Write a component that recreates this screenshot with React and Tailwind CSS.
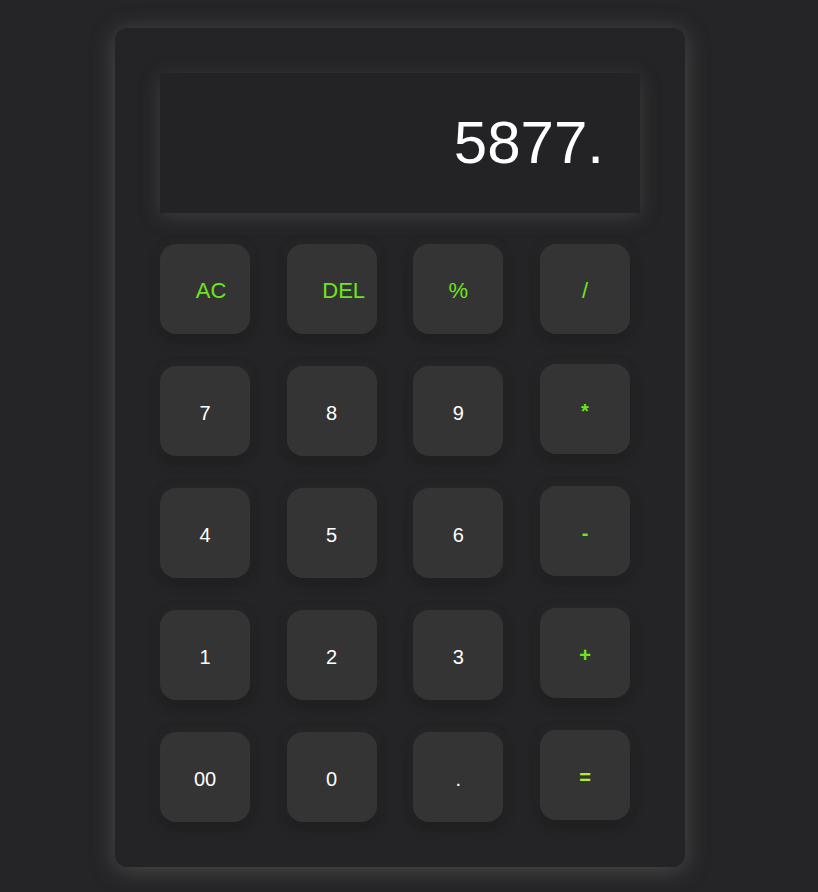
import React from "react";

const rows = [
  [
    { label: "AC", kind: "fn", pad: "pl-3" },
    { label: "DEL", kind: "fn", pad: "pl-6" },
    { label: "%", kind: "fn", pad: "" },
    { label: "/", kind: "fn", pad: "" },
  ],
  [
    { label: "7" },
    { label: "8" },
    { label: "9" },
    { label: "*", kind: "op", lift: true },
  ],
  [
    { label: "4" },
    { label: "5" },
    { label: "6" },
    { label: "-", kind: "op", lift: true },
  ],
  [
    { label: "1" },
    { label: "2" },
    { label: "3" },
    { label: "+", kind: "op", lift: true },
  ],
  [
    { label: "00" },
    { label: "0" },
    { label: "." },
    { label: "=", kind: "eq", lift: true },
  ],
];

const Key = ({ label, kind, pad = "", lift }) => {
  let text = "text-white text-[20px]";
  if (kind === "fn") text = "text-[#6ee41c] text-[22px]";
  if (kind === "op") text = "text-[#6ee41c] text-[20px] font-bold";
  if (kind === "eq") text = "text-[#b0f020] text-[20px] font-bold";

  return (
    <button
      className={`w-[90px] h-[90px] rounded-2xl bg-[#343434] flex items-center justify-center pt-[3px] shadow-[0_4px_14px_rgba(0,0,0,0.3),0_0_10px_rgba(80,80,80,0.25)] ${pad} ${text} ${lift ? "-mt-0.5" : ""}`}
    >
      {label}
    </button>
  );
};

const App = () => {
  return (
    <div className="min-h-[892px] bg-[#252527] flex justify-center pr-[18px] pt-[28px] font-['Liberation_Sans',Arial,sans-serif]">
      <div className="w-[570px] h-[839px] rounded-xl bg-[#242426] p-[45px] shadow-[0_3px_22px_rgba(110,106,104,0.55)]">
        <div className="h-[140px] bg-[#232325] flex items-center justify-end pr-[36px] shadow-[0_4px_18px_rgba(90,88,88,0.45)]">
          <span className="text-white text-[60px] leading-none">5877.</span>
        </div>
        <div className="mt-[31px] w-[470px] flex flex-col gap-8">
          {rows.map((row, i) => (
            <div key={i} className="flex justify-between items-start">
              {row.map((k) => (
                <Key key={k.label} {...k} />
              ))}
            </div>
          ))}
        </div>
      </div>
    </div>
  );
};

export default App;
